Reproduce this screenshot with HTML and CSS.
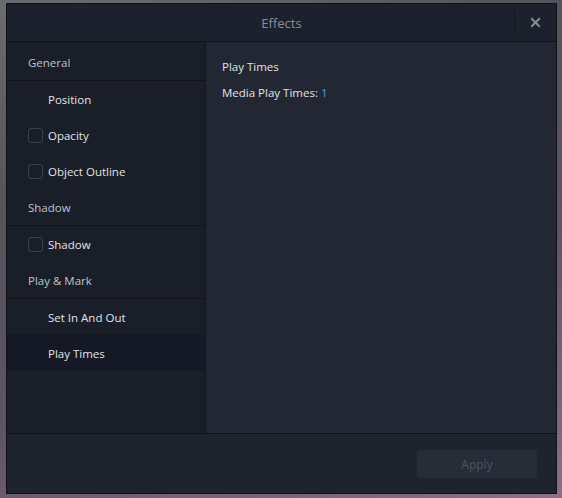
FILE: index.html
```html
<!DOCTYPE html>
<html>
<head>
    <meta charset="utf-8">
    <meta name="viewport" content="width=device-width, initial-scale=1">
    <title>Effects</title>
    <link rel="stylesheet" href="styles.css">
</head>
<body>
    <div class="window">
        <div class="titlebar">
            <div class="title">Effects</div>
            <div class="close">
                <svg width="11" height="11" viewBox="0 0 11 11">
                    <path d="M1.2 1.2 L9.8 9.8 M9.8 1.2 L1.2 9.8" stroke="#858a94" stroke-width="2" fill="none"/>
                </svg>
            </div>
        </div>

        <div class="main">
            <ul class="sidebar">
                <li class="group line">General</li>
                <li class="item">Position</li>
                <li class="item"><span class="check"></span>Opacity</li>
                <li class="item"><span class="check"></span>Object Outline</li>
                <li class="group line">Shadow</li>
                <li class="item"><span class="check"></span>Shadow</li>
                <li class="group line">Play &amp; Mark</li>
                <li class="item">Set In And Out</li>
                <li class="item active">Play Times</li>
            </ul>

            <div class="content">
                <p class="heading">Play Times</p>
                <p class="field">Media Play Times: <span class="value">1</span></p>
            </div>
        </div>

        <div class="footer">
            <button class="apply" disabled>Apply</button>
        </div>
    </div>
</body>
</html>
```

FILE: styles.css
```css
body {
    margin: 0;
    height: 498px;
    overflow: hidden;
    font-family: "Open Sans", "Noto Sans", sans-serif;
    font-size: 11.5px;
    background: linear-gradient(160deg, #6b6b70 0%, #55535a 30%, #5d5363 60%, #8a7088 100%);
}
.window {
    box-sizing: border-box;
    width: 551px;
    height: 491px;
    margin: 3px 0 0 6px;
    border: 1px solid #0e1118;
    display: flex;
    flex-direction: column;
    background-color: #1f232e;
}
.titlebar {
    height: 37px;
    display: flex;
    align-items: center;
    background-color: #1d212d;
    border-bottom: 1px solid #10131a;
}
.title {
    flex: 1;
    text-align: center;
    padding-left: 42px;
    font-size: 13px;
    color: #878d99;
}
.close {
    width: 41px;
    height: 26px;
    border-left: 1px solid #141821;
    display: flex;
    align-items: center;
    justify-content: center;
}
.main {
    flex: 1;
    display: flex;
}
.sidebar {
    list-style: none;
    margin: 0;
    padding: 2px 0 0 0;
    width: 198px;
    background-color: #1a1e28;
    border-right: 1px solid #12151d;
}
.sidebar li {
    height: 36px;
    display: flex;
    align-items: center;
    color: #e1e3e7;
}
.sidebar .group {
    padding-left: 21px;
    color: #bfc3cb;
}
.sidebar .line {
    border-bottom: 1px solid #11141b;
}
.sidebar .item {
    padding-left: 21px;
}
.sidebar .item::before {
    content: "";
    width: 20px;
}
.sidebar .item .check {
    box-sizing: border-box;
    width: 15px;
    height: 15px;
    margin-left: -20px;
    margin-right: 5px;
    border: 1px solid #3b404b;
    border-radius: 3px;
}
.sidebar .active {
    background-color: #151925;
}
.content {
    flex: 1;
    padding: 17px 16px;
    background-color: #222733;
}
.content p {
    margin: 0;
    color: #e1e3e7;
}
.heading {
    margin-bottom: 11px !important;
}
.value {
    color: #3aa2dc;
}
.footer {
    height: 59px;
    border-top: 1px solid #10131a;
    display: flex;
    align-items: center;
    justify-content: flex-end;
    padding-right: 19px;
}
.apply {
    width: 120px;
    height: 28px;
    margin-top: 1px;
    border: none;
    border-radius: 3px;
    background-color: #272c38;
    color: #4e5461;
    font-family: "Open Sans", "Noto Sans", sans-serif;
    font-size: 12px;
}
```
